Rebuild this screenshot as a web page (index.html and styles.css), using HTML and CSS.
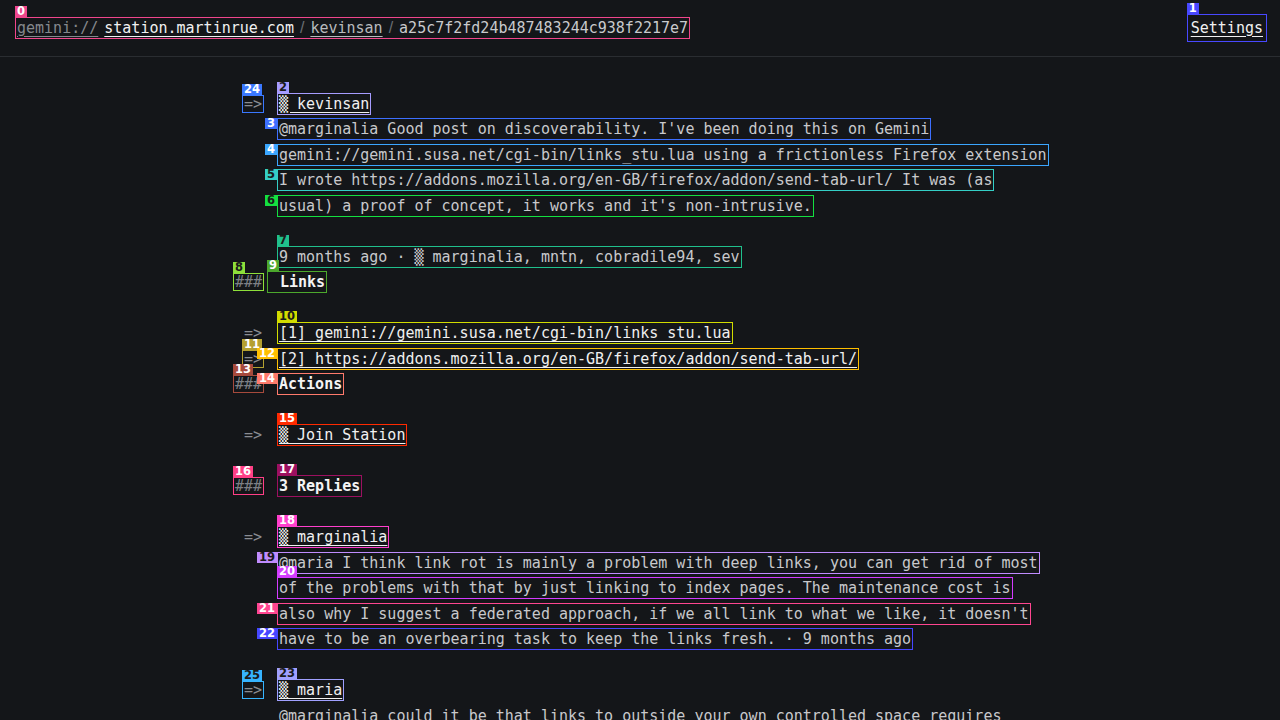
FILE: index.html
```html
<!DOCTYPE html>
<html lang="en">
<head>
<meta charset="utf-8">
<title>kevinsan – station.martinrue.com</title>
<link rel="stylesheet" href="styles.css">
</head>
<body>
<header class="topbar">
  <nav class="crumbs mk c0"><b class="tag">0</b>
    <a class="crumb dim" href="#">gemini://</a>
    <a class="crumb host" href="#">station.martinrue.com</a>
    <span class="sep">/</span>
    <a class="crumb user" href="#">kevinsan</a>
    <span class="sep">/</span>
    <span class="crumb hash">a25c7f2fd24b487483244c938f2217e7</span>
  </nav>
  <a class="settings mk c1" href="#"><b class="tag">1</b><span class="ul">Settings</span></a>
</header>

<main class="page">
  <div class="row"><span class="g mk c24"><b class="tag">24</b>=&gt;</span><a class="t link mk c2" href="#"><b class="tag">2</b><span class="ul">▒ kevinsan</span></a></div>
  <div class="row"><span class="t mk c3"><b class="tag side">3</b>@marginalia Good post on discoverability. I've been doing this on Gemini</span></div>
  <div class="row"><span class="t mk c4"><b class="tag side">4</b>gemini://gemini.susa.net/cgi-bin/links_stu.lua using a frictionless Firefox extension</span></div>
  <div class="row"><span class="t mk c5"><b class="tag side">5</b>I wrote https://addons.mozilla.org/en-GB/firefox/addon/send-tab-url/ It was (as</span></div>
  <div class="row"><span class="t mk c6"><b class="tag side">6</b>usual) a proof of concept, it works and it's non-intrusive.</span></div>
  <div class="row blank"></div>
  <div class="row"><span class="t mk c7"><b class="tag">7</b>9 months ago · ▒ marginalia, mntn, cobradile94, sev</span></div>
  <div class="row"><span class="g hd mk c8"><b class="tag">8</b>###</span><h3 class="t h mk c9 wide"><b class="tag">9</b>Links</h3></div>
  <div class="row blank"></div>
  <div class="row"><span class="g">=&gt;</span><a class="t link mk c10" href="#"><b class="tag">10</b><span class="ul">[1] gemini://gemini.susa.net/cgi-bin/links_stu.lua</span></a></div>
  <div class="row"><span class="g mk c11"><b class="tag">11</b>=&gt;</span><a class="t link mk c12" href="#"><b class="tag side">12</b><span class="ul">[2] https://addons.mozilla.org/en-GB/firefox/addon/send-tab-url/</span></a></div>
  <div class="row"><span class="g hd mk c13"><b class="tag">13</b>###</span><h3 class="t h mk c14"><b class="tag side">14</b>Actions</h3></div>
  <div class="row blank"></div>
  <div class="row"><span class="g">=&gt;</span><a class="t link mk c15" href="#"><b class="tag">15</b><span class="ul">▒ Join Station</span></a></div>
  <div class="row blank"></div>
  <div class="row"><span class="g hd mk c16"><b class="tag">16</b>###</span><h3 class="t h mk c17"><b class="tag">17</b>3 Replies</h3></div>
  <div class="row blank"></div>
  <div class="row"><span class="g">=&gt;</span><a class="t link mk c18" href="#"><b class="tag">18</b><span class="ul">▒ marginalia</span></a></div>
  <div class="row"><span class="t mk c19"><b class="tag side">19</b>@maria I think link rot is mainly a problem with deep links, you can get rid of most</span></div>
  <div class="row"><span class="t mk c20"><b class="tag">20</b>of the problems with that by just linking to index pages. The maintenance cost is</span></div>
  <div class="row"><span class="t mk c21"><b class="tag side">21</b>also why I suggest a federated approach, if we all link to what we like, it doesn't</span></div>
  <div class="row"><span class="t mk c22"><b class="tag side">22</b>have to be an overbearing task to keep the links fresh. · 9 months ago</span></div>
  <div class="row blank"></div>
  <div class="row"><span class="g mk c25"><b class="tag">25</b>=&gt;</span><a class="t link mk c23" href="#"><b class="tag">23</b><span class="ul">▒ maria</span></a></div>
  <div class="row"><span class="t">@marginalia could it be that links to outside your own controlled space requires</span></div>
</main>
</body>
</html>
```

FILE: styles.css
```css
html, body {
  margin: 0;
  padding: 0;
}

body {
  background: #141619;
  color: #c8c9cc;
  font-family: "DejaVu Sans Mono", "Liberation Mono", monospace;
  font-size: 15px;
  overflow: hidden;
}

a {
  color: inherit;
  text-decoration: none;
}

/* ---------- top bar ---------- */
.topbar {
  height: 57px;
  box-sizing: border-box;
  border-bottom: 1px solid #2a2d31;
  display: flex;
  align-items: center;
  justify-content: space-between;
  padding: 0 13px 1px 15px;
}

.crumbs {
  display: flex;
  align-items: center;
  gap: 6px;
  padding: 0 2px;
  line-height: 22px;
}

.crumb.dim {
  color: #85888d;
  text-decoration: underline;
  text-underline-offset: 3px;
}

.crumb.host {
  color: #f1f1f1;
  text-decoration: underline;
  text-underline-offset: 3px;
}

.crumb.user {
  color: #b9bbbe;
  text-decoration: underline;
  text-underline-offset: 3px;
}

.crumb.hash {
  color: #c9cacd;
}

.sep {
  font-family: "Liberation Sans", sans-serif;
  color: #6b6e73;
  font-size: 16px;
}

.settings {
  color: #f1f1f1;
  padding: 3px 4px;
  line-height: 22px;
}

.ul {
  text-decoration: underline;
  text-underline-offset: 3px;
}

/* ---------- page ---------- */
.page {
  width: 828px;
  margin: 0 auto;
  padding-top: 34px;
}

.row {
  display: grid;
  grid-template-columns: 36px 1fr;
  column-gap: 18px;
  align-items: center;
  height: 25.5px;
}

.g {
  grid-column: 1;
  justify-self: end;
  color: #8a8d92;
  padding: 0 2px;
  margin-right: -2px;
  line-height: 18px;
}

.g.hd {
  color: #7d8085;
}

.t {
  grid-column: 2;
  justify-self: start;
  padding: 0 2px;
  margin: 0 0 0 -3px;
  line-height: 22px;
  white-space: pre;
}

.link {
  color: #f0f0f0;
}

.h {
  font-size: 15px;
  font-weight: bold;
  color: #f4f4f4;
}

.h.wide {
  margin-left: -13px;
  padding-left: 13px;
}

/* ---------- annotation marks ---------- */
.mk {
  position: relative;
  outline: 1px solid var(--c);
  outline-offset: -1px;
}

.tag {
  position: absolute;
  left: 0;
  bottom: 100%;
  background: var(--c);
  color: #ffffff;
  font-family: "DejaVu Sans", sans-serif;
  font-size: 11.5px;
  font-weight: bold;
  line-height: 11px;
  padding: 0 2px;
  text-decoration: none;
  white-space: nowrap;
}

.tag.side {
  left: auto;
  right: 100%;
  bottom: auto;
  top: 0;
}

.c0 { --c: #f0468c; }
.c1 { --c: #4848ff; }
.c2 { --c: #a69cff; }
.c3 { --c: #3d6fff; }
.c4 { --c: #3ba6ff; }
.c5 { --c: #34cfc6; }
.c6 { --c: #14e040; }
.c7 { --c: #20c08c; }
.c8 { --c: #8ee03a; }
.c9 { --c: #4ca82c; }
.c10 { --c: #d2dc00; }
.c11 { --c: #b4a030; }
.c12 { --c: #ffbf00; }
.c13 { --c: #a64a3c; }
.c14 { --c: #ff7a6c; }
.c15 { --c: #ff2a00; }
.c16 { --c: #ff3f86; }
.c17 { --c: #9c1060; }
.c18 { --c: #ff3fcc; }
.c19 { --c: #c08cff; }
.c20 { --c: #d43cff; }
.c21 { --c: #ff4690; }
.c22 { --c: #4646ff; }
.c23 { --c: #a0a0ff; }
.c24 { --c: #3a78ff; }
.c25 { --c: #36b4ff; }

.c2 > .tag,
.c19 > .tag,
.c23 > .tag,
.c5 > .tag,
.c6 > .tag,
.c7 > .tag,
.c8 > .tag,
.c10 > .tag,
.c25 > .tag {
  color: #1a1a1a;
}
```
